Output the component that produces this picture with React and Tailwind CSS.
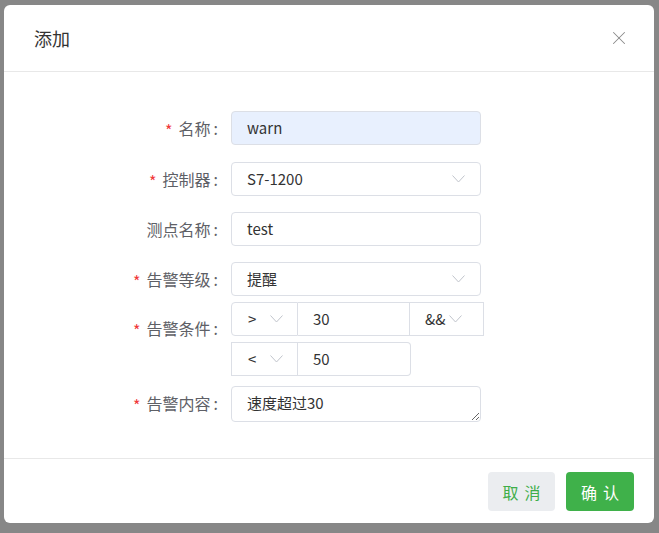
import { X } from "lucide-react";

function Chevron({ className = "" }) {
  return (
    <svg width="13" height="8" viewBox="0 0 13 8" className={className}>
      <path d="M0.5 0.5 L6.5 7 L12.5 0.5" fill="none" stroke="#c0c4cc" strokeWidth="1" />
    </svg>
  );
}

function Label({ required, children, className = "" }) {
  return (
    <div className={`w-[218px] shrink-0 flex justify-end items-center pr-[4px] text-[16px] text-[#5e6066] ${className}`}>
      {required && <span className="text-[#f0383a] mr-[6px] text-[16px] leading-none pt-[3px]">*</span>}
      <span>{children}</span>
      <span className="ml-[3px]">:</span>
    </div>
  );
}

function Field({ children, select, bg = "bg-white" }) {
  return (
    <div
      className={`w-[250px] h-[34px] border border-[#dcdfe6] rounded-[4px] ${bg} flex items-center justify-between pl-[15px] pr-[15px] text-[15px] text-[#333]`}
    >
      <span>{children}</span>
      {select && <Chevron />}
    </div>
  );
}

export default function App() {
  return (
    <div
      className="w-[659px] h-[533px] bg-[#878787] pt-[5px] pl-[4px] overflow-hidden"
      style={{ fontFamily: '"Noto Sans CJK SC", "Noto Sans", sans-serif' }}
    >
      <div className="w-[650px] h-[518px] bg-white rounded-[6px] flex flex-col">
        <div className="h-[67px] shrink-0 flex items-center justify-between pl-[30px] pr-[24px] border-b border-[#e8e8e8]">
          <span className="text-[18px] text-[#333] leading-none">添加</span>
          <X size={22} strokeWidth={1.1} color="#8a8a8a" />
        </div>

        <div className="flex-1 pt-[39px] flex flex-col gap-[16px]">
          <div className="flex items-center gap-[9px]">
            <Label required>名称</Label>
            <Field bg="bg-[#e8f0fe]">warn</Field>
          </div>
          <div className="flex items-center gap-[9px] mt-[1px]">
            <Label required>控制器</Label>
            <Field select>S7-1200</Field>
          </div>
          <div className="flex items-center gap-[9px]">
            <Label>测点名称</Label>
            <Field>test</Field>
          </div>
          <div className="flex items-center gap-[9px]">
            <Label required>告警等级</Label>
            <Field select>提醒</Field>
          </div>
          <div className="flex items-start gap-[9px] -mt-[10px]">
            <Label required className="pt-[14px]">告警条件</Label>
            <div className="flex flex-col gap-[6px]">
              <div className="flex h-[34px] text-[15px] text-[#333]">
                <div className="w-[67px] border border-[#dcdfe6] rounded-l-[4px] flex items-center pl-[16px] gap-[14px]">
                  <span>&gt;</span>
                  <Chevron />
                </div>
                <div className="w-[111px] border-y border-[#dcdfe6] flex items-center pl-[15px]">30</div>
                <div className="w-[75px] border border-[#dcdfe6] flex items-center pl-[15px] gap-[4px]">
                  <span>&amp;&amp;</span>
                  <Chevron />
                </div>
              </div>
              <div className="flex h-[34px] text-[15px] text-[#333]">
                <div className="w-[67px] border border-[#dcdfe6] flex items-center pl-[16px] gap-[14px]">
                  <span>&lt;</span>
                  <Chevron />
                </div>
                <div className="w-[113px] border-y border-r border-[#dcdfe6] rounded-r-[4px] flex items-center pl-[15px]">50</div>
              </div>
            </div>
          </div>
          <div className="flex items-start gap-[9px] -mt-[6px]">
            <Label required className="pt-[5px]">告警内容</Label>
            <textarea
              readOnly
              value="速度超过30"
              className="w-[250px] h-[36px] border border-[#dcdfe6] rounded-[4px] px-[15px] py-[5px] text-[15px] text-[#333] leading-[22px] outline-none"
            />
          </div>
        </div>

        <div className="h-[65px] shrink-0 border-t border-[#e8e8e8] flex items-start justify-end gap-[11px] pt-[13px] pr-[20px]">
          <button className="w-[67px] h-[39px] rounded-[4px] bg-[#ebedf0] text-[#3fae49] text-[16px] tracking-[6px] pl-[6px]">
            取消
          </button>
          <button className="w-[68px] h-[39px] rounded-[4px] bg-[#3fb14a] text-white text-[16px] tracking-[6px] pl-[6px]">
            确认
          </button>
        </div>
      </div>
    </div>
  );
}
